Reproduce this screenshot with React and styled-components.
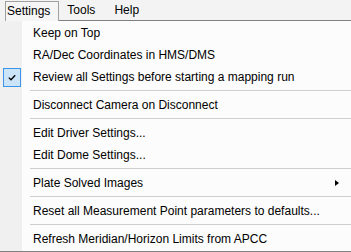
import React from "react";
import styled, { createGlobalStyle } from "styled-components";

const GlobalStyle = createGlobalStyle`
  html, body { margin: 0; padding: 0; background: #fcfcfc; }
  body {
    font-family: "Liberation Sans", Arial, sans-serif;
    font-size: 12px;
    color: #000;
  }
`;

const Window = styled.div`
  width: 351px;
  height: 252px;
  overflow: hidden;
  display: flex;
  flex-direction: column;
  background: #fcfcfc;
`;

const MenuBar = styled.div`
  display: flex;
  align-items: stretch;
  height: 21px;
  background: #f3f3f3;
  flex: none;
`;

const Lead = styled.div`
  width: 5px;
`;

const Tab = styled.div`
  margin-top: 1px;
  border: 1px solid #a0a0a0;
  border-bottom: none;
  padding: 0 8px 0 1px;
  line-height: 19px;
  background: #f5f5f5;
`;

const BarItem = styled.div`
  border-bottom: 1px solid #808080;
  padding: 1px ${(p) => p.$pr}px 0 ${(p) => p.$pl}px;
  line-height: 19px;
`;

const Filler = styled.div`
  flex: 1;
  border-bottom: 1px solid #808080;
`;

const Dropdown = styled.div`
  flex: none;
  padding: 1px 0;
  border-bottom: 1px solid #808080;
  background: linear-gradient(to right, #f0f0f0 22px, #fcfcfc 22px);
`;

const Item = styled.div`
  display: grid;
  grid-template-columns: 33px 1fr auto;
  align-items: center;
  height: 22px;
  white-space: nowrap;
`;

const CheckCell = styled.div`
  display: flex;
  align-items: center;
  height: 22px;
`;

const CheckBox = styled.div`
  box-sizing: border-box;
  margin-left: 3px;
  width: 18px;
  height: 19px;
  border: 1px solid #3c95e6;
  background: #cce4f7;
  display: flex;
  align-items: center;
  justify-content: center;
`;

const Label = styled.span`
  line-height: 22px;
`;

const SubArrow = styled.div`
  width: 0;
  height: 0;
  margin-right: 12px;
  border-top: 3.5px solid transparent;
  border-bottom: 3.5px solid transparent;
  border-left: 4px solid #000;
`;

const Separator = styled.div`
  height: 1px;
  margin: 2px 0 3px 30px;
  background: #cfcfcf;
`;

const entries = [
  { label: "Keep on Top" },
  { label: "RA/Dec Coordinates in HMS/DMS" },
  { label: "Review all Settings before starting a mapping run", checked: true },
  { sep: true },
  { label: "Disconnect Camera on Disconnect" },
  { sep: true },
  { label: "Edit Driver Settings..." },
  { label: "Edit Dome Settings..." },
  { sep: true },
  { label: "Plate Solved Images", sub: true },
  { sep: true },
  { label: "Reset all Measurement Point parameters to defaults..." },
  { sep: true },
  { label: "Refresh Meridian/Horizon Limits from APCC" },
];

export default function App() {
  return (
    <>
      <GlobalStyle />
      <Window>
        <MenuBar>
          <Lead />
          <Tab>Settings</Tab>
          <BarItem $pl={8} $pr={9}>Tools</BarItem>
          <BarItem $pl={10} $pr={10}>Help</BarItem>
          <Filler />
        </MenuBar>
        <Dropdown>
          {entries.map((e, i) =>
            e.sep ? (
              <Separator key={i} />
            ) : (
              <Item key={i}>
                <CheckCell>
                  {e.checked && (
                    <CheckBox>
                      <svg width="8" height="7" viewBox="0 0 8 7">
                        <path d="M0.8 3.6 L3 5.8 L7.2 1.2" fill="none" stroke="#000" strokeWidth="1.3" />
                      </svg>
                    </CheckBox>
                  )}
                </CheckCell>
                <Label>{e.label}</Label>
                {e.sub ? <SubArrow /> : <span />}
              </Item>
            )
          )}
        </Dropdown>
      </Window>
    </>
  );
}
